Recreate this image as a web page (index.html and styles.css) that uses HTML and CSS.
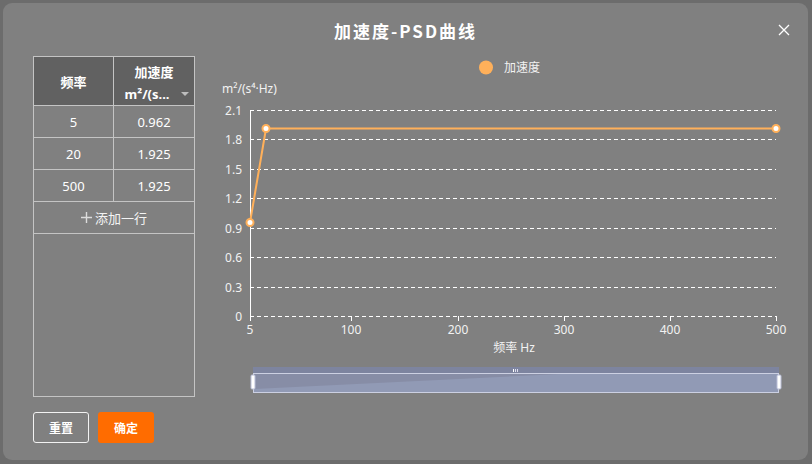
FILE: index.html
```html
<!DOCTYPE html>
<html lang="zh">
<head>
<meta charset="utf-8">
<title>加速度-PSD曲线</title>
<link rel="stylesheet" href="styles.css">
</head>
<body>
<div class="dialog">
  <div class="header">
    <div class="title">加速度-PSD曲线</div>
    <div class="close">
      <svg width="12" height="12" viewBox="0 0 12 12"><path d="M1 1L11 11M11 1L1 11" stroke="#fff" stroke-width="1.3" fill="none"/></svg>
    </div>
  </div>
  <div class="body">
    <div class="left">
      <div class="table">
        <div class="row head">
          <div class="cell c1">频率</div>
          <div class="cell c2">
            <div class="h-top">加速度</div>
            <div class="h-bot"><span>m²/(s...</span><span class="caret"></span></div>
          </div>
        </div>
        <div class="row"><div class="cell c1">5</div><div class="cell c2">0.962</div></div>
        <div class="row"><div class="cell c1">20</div><div class="cell c2">1.925</div></div>
        <div class="row"><div class="cell c1">500</div><div class="cell c2">1.925</div></div>
        <div class="row add"><svg class="plus" width="11" height="11" viewBox="0 0 11 11"><path d="M5.5 0V11M0 5.5H11" stroke="#dcdcdc" stroke-width="1.4"/></svg>添加一行</div>
        <div class="empty"></div>
      </div>
      <div class="buttons">
        <button class="btn reset">重置</button>
        <button class="btn ok">确定</button>
      </div>
    </div>
    <div class="right">
      <svg class="chart" width="590" height="350" viewBox="210 52 590 350">
        <g font-family="'Noto Sans','Noto Sans CJK SC',sans-serif" fill="#f2f2f2">
          <circle cx="486" cy="67.5" r="7" fill="#ffb05a"/>
          <text x="504" y="72" font-size="12">加速度</text>
          <text x="222" y="93" font-size="12" fill="#f2f2f2">m²/(s⁴·Hz)</text>
        </g>
        <g stroke="#fff" stroke-width="1" stroke-dasharray="4 3" fill="none">
          <line x1="250" y1="110.5" x2="776" y2="110.5"/>
          <line x1="250" y1="139.5" x2="776" y2="139.5"/>
          <line x1="250" y1="169.5" x2="776" y2="169.5"/>
          <line x1="250" y1="198.5" x2="776" y2="198.5"/>
          <line x1="250" y1="228.5" x2="776" y2="228.5"/>
          <line x1="250" y1="257.5" x2="776" y2="257.5"/>
          <line x1="250" y1="287.5" x2="776" y2="287.5"/>
          <line x1="250" y1="316.5" x2="776" y2="316.5"/>
        </g>
        <g stroke="#fff" stroke-width="1" fill="none">
          <line x1="250.5" y1="110" x2="250.5" y2="321"/>
          <line x1="351.5" y1="316" x2="351.5" y2="321"/>
          <line x1="458.5" y1="316" x2="458.5" y2="321"/>
          <line x1="564.5" y1="316" x2="564.5" y2="321"/>
          <line x1="670.5" y1="316" x2="670.5" y2="321"/>
          <line x1="776.5" y1="316" x2="776.5" y2="321"/>
        </g>
        <g font-family="'Noto Sans',sans-serif" font-size="12" fill="#f2f2f2" text-anchor="end">
          <text x="242" y="114.5">2.1</text>
          <text x="242" y="144">1.8</text>
          <text x="242" y="173.5">1.5</text>
          <text x="242" y="203">1.2</text>
          <text x="242" y="232.5">0.9</text>
          <text x="242" y="262">0.6</text>
          <text x="242" y="291.5">0.3</text>
          <text x="242" y="321">0</text>
        </g>
        <g font-family="'Noto Sans',sans-serif" font-size="12" fill="#f2f2f2" text-anchor="middle">
          <text x="250" y="334">5</text>
          <text x="351" y="334">100</text>
          <text x="458" y="334">200</text>
          <text x="564" y="334">300</text>
          <text x="670" y="334">400</text>
          <text x="776" y="334">500</text>
          <text x="514" y="352" font-family="'Noto Sans','Noto Sans CJK SC',sans-serif">频率  Hz</text>
        </g>
        <polyline points="250,222.5 266,128.5 776,128.5" fill="none" stroke="#ffb05a" stroke-width="2"/>
        <g fill="#fff" stroke="#ffb05a" stroke-width="2">
          <circle cx="250" cy="222.5" r="3.5"/>
          <circle cx="266" cy="128.5" r="3.5"/>
          <circle cx="776" cy="128.5" r="3.5"/>
        </g>
        <!-- data zoom slider -->
        <rect x="253" y="367" width="526" height="26" fill="#878da6"/>
        <rect x="253" y="367" width="526" height="6" fill="#7d849f"/>
        <polygon points="253,389 560,374 779,374 779,392 253,392" fill="#919ab5"/>
        <rect x="253.5" y="373.5" width="525" height="19" fill="none" stroke="#ccd0e2" stroke-width="1"/>
        <rect x="251" y="375" width="4" height="14" rx="1" fill="#fff" stroke="#b8bdd6" stroke-width="1"/>
        <rect x="777" y="375" width="4" height="14" rx="1" fill="#fff" stroke="#b8bdd6" stroke-width="1"/>
        <rect x="513" y="369" width="1" height="3" fill="#fff"/>
        <rect x="515" y="369" width="1" height="3" fill="#dde"/>
        <rect x="517" y="369" width="1" height="3" fill="#dde"/>
      </svg>
    </div>
  </div>
</div>
</body>
</html>
```
FILE: styles.css
```css
* { box-sizing: border-box; }
html, body { margin: 0; padding: 0; }
body {
  width: 812px;
  height: 464px;
  background: #6c6c6c;
  font-family: "Noto Sans", "Noto Sans CJK SC", sans-serif;
  color: #fff;
  overflow: hidden;
}
.dialog {
  margin: 3px 0 0 3px;
  width: 805px;
  height: 457px;
  background: #808080;
  border-radius: 9px;
  display: flex;
  flex-direction: column;
}
.header {
  height: 53px;
  display: flex;
  align-items: center;
  justify-content: center;
  position: relative;
}
.title {
  font-size: 17px;
  font-weight: bold;
  letter-spacing: 2px;
  font-family: "Noto Sans CJK SC", sans-serif;
  margin-top: 1px;
}
.close {
  position: absolute;
  right: 18px;
  top: 21px;
  width: 12px;
  height: 12px;
  display: flex;
}
.body {
  display: flex;
  flex: 1;
}
.left {
  padding-left: 30px;
  width: 207px;
  display: flex;
  flex-direction: column;
}
.table {
  width: 162px;
  height: 341px;
  border: 1px solid #c4c4c4;
  display: flex;
  flex-direction: column;
  font-size: 13px;
}
.row {
  display: flex;
  height: 32px;
  border-bottom: 1px solid #c4c4c4;
}
.row.head {
  height: 49px;
  background: #616161;
  font-weight: bold;
}
.cell {
  display: flex;
  align-items: center;
  justify-content: center;
}
.c1 {
  width: 80px;
  border-right: 1px solid #c4c4c4;
}
.c2 { flex: 1; }
.head .c2 {
  flex-direction: column;
  gap: 4px;
  padding-top: 3px;
}
.h-top { line-height: 18px; }
.h-bot {
  display: flex;
  align-items: center;
  line-height: 18px;
  padding-left: 6px;
}
.caret {
  width: 0;
  height: 0;
  border-left: 4px solid transparent;
  border-right: 4px solid transparent;
  border-top: 4px solid #bdbdbd;
  margin-left: 12px;
}
.row.add {
  align-items: center;
  justify-content: center;
  color: #f4f4f4;
}
.plus {
  display: block;
  margin-right: 3px;
}
.empty { flex: 1; }
.buttons {
  display: flex;
  gap: 9px;
  margin-top: 15px;
}
.btn {
  width: 56px;
  height: 31px;
  border-radius: 3px;
  font-family: "Noto Sans CJK SC", sans-serif;
  font-size: 12px;
  font-weight: bold;
  color: #fff;
  padding: 0;
  cursor: pointer;
}
.reset {
  background: transparent;
  border: 1px solid #f2f2f2;
}
.ok {
  background: #ff6c00;
  border: none;
}
.right {
  margin-top: -4px;
  flex: 1;
}
.chart { display: block; }
```
